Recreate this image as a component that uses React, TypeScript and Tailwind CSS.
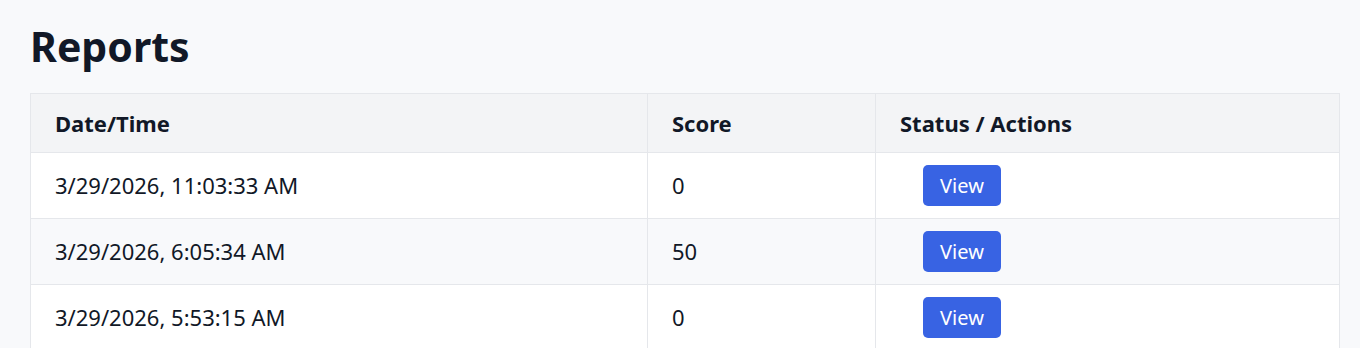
import React from "react";

const rows = [
  { date: "3/29/2026, 11:03:33 AM", score: "0" },
  { date: "3/29/2026, 6:05:34 AM", score: "50" },
  { date: "3/29/2026, 5:53:15 AM", score: "0" },
];

export default function App() {
  return (
    <div
      className="min-h-[348px] bg-[#f8f9fb] pl-[30px] pr-[20px] pt-[20px] text-[#111827]"
      style={{ fontFamily: '"Noto Sans", "Open Sans", sans-serif' }}
    >
      <h1 className="m-0 mb-[21px] text-[41px] font-bold leading-[52px]">Reports</h1>
      <table className="w-full border-collapse border border-[#e5e7eb] text-[22px]">
        <thead>
          <tr className="bg-[#f3f4f6]">
            <th className="w-[617px] border border-[#e5e7eb] px-6 py-4 text-left text-[22px] font-bold leading-[26px]">Date/Time</th>
            <th className="w-[228px] border border-[#e5e7eb] px-6 py-4 text-left text-[22px] font-bold leading-[26px]">Score</th>
            <th className="border border-[#e5e7eb] px-6 py-4 text-left text-[22px] font-bold leading-[26px]">Status / Actions</th>
          </tr>
        </thead>
        <tbody>
          {rows.map((r, i) => (
            <tr key={i} className={i % 2 === 1 ? "bg-[#f8f9fb]" : "bg-white"}>
              <td className="border border-[#e5e7eb] px-6 py-3 text-[22px] leading-[25px]">{r.date}</td>
              <td className="border border-[#e5e7eb] px-6 py-3 text-[22px] leading-[25px]">{r.score}</td>
              <td className="border border-[#e5e7eb] px-6 py-3 text-[22px]">
                <button className="ml-[23px] block h-[41px] w-[78px] rounded-[5px] bg-[#3863e3] text-[20px] leading-[41px] text-white">
                  View
                </button>
              </td>
            </tr>
          ))}
        </tbody>
      </table>
    </div>
  );
}
